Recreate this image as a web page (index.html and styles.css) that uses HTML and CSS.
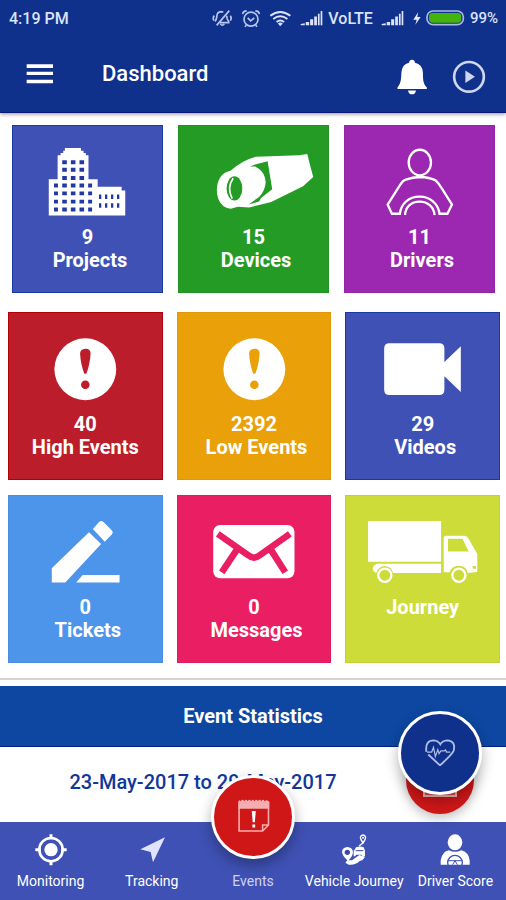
FILE: index.html
```html
<!DOCTYPE html>
<html lang="en">
<head>
<meta charset="utf-8">
<meta name="viewport" content="width=device-width, initial-scale=1">
<title>Dashboard</title>
<link rel="stylesheet" href="styles.css">
</head>
<body>
<div class="screen">
  <header class="top">
    <div class="status">
      <span class="clock">4:19 PM</span>
      <svg class="s-mute" viewBox="38 24 60 54" fill="none" stroke="#b9c5ef" stroke-width="5"><path d="M47 61C54 54 51 47 54 39Q57 32 66 32L72 34M82 44C82 53 84 57 88 61L88 65H62M63 69Q69 76 75 69M52 73L90 29"/><path d="M45 44Q39 51 44 59M93 44Q98 51 93 59"/></svg>
      <svg class="s-alarm" viewBox="124 22 60 56" fill="none" stroke="#b9c5ef" stroke-width="5"><circle cx="154" cy="52" r="21"/><path d="M144 48L153 57L164 48M129 37Q130 27 141 27M167 27Q178 27 179 37M140 70L136 75M168 70L172 75"/></svg>
      <svg class="s-wifi" viewBox="210 26 70 51" fill="none" stroke="#dce3fa" stroke-width="6"><path d="M214 43Q244 20 275 43M223 53Q244 37 266 53M233 62Q244 53 256 62"/><path fill="#dce3fa" stroke="none" d="M237 67Q244 61 252 67L244 75Z"/></svg>
      <svg class="s-signal" viewBox="304 30 68 47" fill="#dce3fa"><path d="M306 75V71L318 69V75ZM321 65H331V75H321ZM334 57H343V75H334ZM346 49H354V75H346ZM357 41H362V75H357ZM365 33H370V75H365Z"/></svg>
      <span class="volte">VoLTE</span>
      <svg class="s-signal" viewBox="304 30 68 47" fill="#dce3fa"><path d="M306 75V71L318 69V75ZM321 65H331V75H321ZM334 57H343V75H334ZM346 49H354V75H346ZM357 41H362V75H357ZM365 33H370V75H365Z"/></svg>
      <svg class="s-bolt" viewBox="641 33 24 39" fill="#e6ebff"><path d="M656 34L642 56H652L648 71L664 48H654Z"/></svg>
      <svg class="s-battery" viewBox="678 30 117 48"><rect x="681" y="33" width="109" height="41" rx="18" fill="#10318b" stroke="#a9b8e5" stroke-width="5"/><rect x="687" y="39" width="97" height="29" rx="11" fill="#43b40b"/></svg>
      <span class="percent">99%</span>
    </div>
    <div class="appbar">
      <button class="icon-btn" aria-label="Menu"><svg class="menu-icon" viewBox="78 187 84 66" fill="#fff"><path d="M80 191H159V202H80ZM80 213H159V223H80ZM80 237H159V248H80Z"/></svg></button>
      <h1>Dashboard</h1>
      <button class="icon-btn bell-btn" aria-label="Notifications"><svg class="bell" viewBox="592 179 92 109" fill="#fff"><path d="M638 181Q646 181 647 190Q670 195 671 220C671 247 673 255 683 265V270H594V265C603 255 605 245 606 220Q607 195 629 190Q630 181 638 181ZM626 274H650Q648 286 638 286T626 274Z"/></svg></button>
      <button class="icon-btn" aria-label="Play"><svg class="play" viewBox="756 180 102 103"><circle cx="807" cy="231" r="45" fill="none" stroke="#ced6f0" stroke-width="8"/><path d="M796 212V250L825 231Z" fill="#ced6f0"/></svg></button>
    </div>
  </header>

  <main>
    <section class="tiles first">
      <a href="#projects" class="tile indigo">
        <svg viewBox="37 28 454 300"><path fill="#fff" d="M146 298V188H173V115H182V108H190V101H195V93H244V101H252V108H259V115H267V188H295V211H368V222H379V298Z"/><path stroke="#2438a4" stroke-width="12" stroke-dasharray="14 12.3" d="M187 136H254M187 159H254M187 184H254M187 207H254M187 231H254M187 256H254M187 280H254"/><path stroke="#2438a4" stroke-width="12" d="M162 207H174M162 231H174M162 256H174M162 280H174M266 207H278M266 231H278M266 256H278M266 280H278"/><path stroke="#2438a4" stroke-width="14" stroke-dasharray="7 11.3" d="M299 241H363M299 268H363"/></svg>
        <span>9</span><span>Projects</span>
      </a>
      <a href="#devices" class="tile green">
        <svg viewBox="-66 -30 454 300"><path fill="#fff" d="M91 104Q126 72 168 61L300 57L325 53L332 82L343 123L312 151L215 199L148 216L113 214L92 220Q63 217 53 188Q43 151 60 124Q70 108 91 104Z"/><path fill="#249b24" d="M150 91L166 85L204 75L218 160L184 187L178 198L146 207Q162 195 178 184Q197 164 198 139Q197 111 176 97L166 91Z"/><ellipse cx="103" cy="158" rx="24" ry="37" fill="#249b24"/><path fill="none" stroke="#fff" stroke-width="5" d="M99 127Q79 155 96 189"/></svg>
        <span>15</span><span>Devices</span>
      </a>
      <a href="#drivers" class="tile purple">
        <svg viewBox="273 28 454 300" fill="none" stroke="#fff" stroke-width="7"><ellipse cx="501" cy="137" rx="34" ry="39"/><path d="M501 181Q531 182 550 192Q560 202 568 216L599 265L585 293H561C557 262 532 241 500 241S444 262 440 293H416L403 265L441 205Q450 191 458 189Q479 182 501 181ZM456 297C457 273 474 256 500 256S544 273 546 297"/></svg>
        <span>11</span><span>Drivers</span>
      </a>
    </section>
    <section class="tiles">
      <a href="#high" class="tile red">
        <svg viewBox="23 19 464 300"><circle cx="255" cy="188" r="94" fill="#fff"/><path fill="#bc1d2b" d="M239 140Q240 127 255 126T271 140Q269 174 258 202H252Q241 174 239 140Z"/><circle cx="255" cy="235" r="13" fill="#bc1d2b"/></svg>
        <span>40</span><span>High Events</span>
      </a>
      <a href="#low" class="tile orange">
        <svg viewBox="23 19 464 300"><circle cx="255" cy="188" r="94" fill="#fff"/><path fill="#e9a009" d="M239 140Q240 127 255 126T271 140Q269 174 258 202H252Q241 174 239 140Z"/><circle cx="255" cy="235" r="13" fill="#e9a009"/></svg>
        <span>2392</span><span>Low Events</span>
      </a>
      <a href="#videos" class="tile indigo">
        <svg viewBox="276 19 464 300" fill="#fff"><path d="M408 109H559Q575 109 575 125V166L625 118V257L575 209V250Q575 266 559 266H408Q392 266 392 250V125Q392 109 408 109Z"/></svg>
        <span>29</span><span>Videos</span>
      </a>
    </section>
    <section class="tiles last">
      <a href="#tickets" class="tile sky">
        <svg viewBox="23 28 464 300" fill="#fff"><path d="M153 246L266 136L303 172L194 289H153ZM278 126L296 106Q303 98 311 106L336 131Q341 136 336 142L314 165ZM227 289L247 266H359V289Z"/></svg>
        <span>0</span><span>Tickets</span>
      </a>
      <a href="#messages" class="tile pink">
        <svg viewBox="529 28 464 300"><rect x="636" y="114" width="247" height="162" rx="21" fill="#fff"/><path fill="none" stroke="#e91e63" stroke-width="20" d="M650 141L744 207Q760 220 776 207L869 141M662 258L708 189M855 258L811 189"/></svg>
        <span>0</span><span>Messages</span>
      </a>
      <a href="#journey" class="tile lime">
        <svg viewBox="276 28 464 300" fill="#fff"><path d="M343 102H565V226H343ZM369 232H565V260H419Q414 241 394 239Q374 240 368 260Q357 255 357 245Q361 235 369 232ZM573 153Q574 147 580 147H636Q643 147 648 155L675 202V257L646 260Q642 239 619 238Q597 239 591 258H573Z"/><path fill="#cddc39" d="M586 156H630L649 195H586ZM661 239H671V247H661Z"/><circle cx="394" cy="267" r="20" fill="none" stroke="#fff" stroke-width="7"/><circle cx="619" cy="267" r="20" fill="none" stroke="#fff" stroke-width="7"/></svg>
        <span>Journey</span>
      </a>
    </section>
    <section class="stats">
      <h2>Event Statistics</h2>
      <p>23-May-2017 to 29-May-2017</p>
      <div class="fabs">
        <button class="fab-small" aria-label="Event list"><svg viewBox="0 0 68 68"><path d="M18 24H50V50H18Z" fill="#dc5052" stroke="#f5b5b7" stroke-width="2"/></svg></button>
        <button class="fab fab-health" aria-label="Health"><svg viewBox="433 62 252 252" fill="none" stroke="#aebbe6" stroke-width="6"><path d="M559 228L521 193M515 184Q510 147 539 147Q553 148 560 160Q567 148 582 147Q611 149 603 181Q600 191 559 228"/><path d="M517 185H532L538 170L544 199L552 177L556 190L562 181H573L577 178L580 185H592" stroke-width="4"/></svg></button>
      </div>
    </section>
  </main>

  <nav class="bottom">
    <a href="#monitoring"><svg viewBox="94 426 120 108"><circle cx="154" cy="479" r="35" fill="none" stroke="#fff" stroke-width="8"/><circle cx="154" cy="479" r="20" fill="#fff"/><path stroke="#fff" stroke-width="9" d="M154 433V448M154 510V526M107 479H123M185 479H201"/></svg>Monitoring</a>
    <a href="#tracking"><svg viewBox="397 426 120 108" fill="#dfe3fb"><path d="M496 442L460 517L453 486L422 478Z"/></svg>Tracking</a>
    <a href="#events" class="events"><span class="fab fab-events"><svg viewBox="633 257 252 252"><path fill="#f5aeb0" d="M711 334Q715 325 720 332Q725 323 731 332Q736 323 742 332Q747 323 753 332Q758 323 764 332Q769 323 775 332Q780 323 786 332Q791 323 797 332Q804 325 812 334V356H711Z"/><path fill="none" stroke="#f5aeb0" stroke-width="5" d="M714 354V428H790L809 409V354M790 428V409H809"/><path fill="#fff" d="M755 364H768L765 400H758ZM757 407H766V417H757Z"/></svg></span>Events</a>
    <a href="#vehicle"><svg viewBox="246 426 120 108"><path fill="#fff" d="M286 471Q302 472 303 487Q302 500 290 511H300L322 495L339 501Q334 511 322 514Q311 526 290 524L280 518L286 511Q270 495 270 485Q271 473 286 471ZM307 481L312 472Q325 467 335 472L339 482V499H332L328 494H313L309 499H305V481Z"/><circle cx="286" cy="487" r="8" fill="#3949ab"/><path stroke="#3949ab" stroke-width="3" d="M311 482H334"/><path fill="none" stroke="#fff" stroke-width="4" d="M333 459Q325 448 325 442Q327 435 333 435T341 442Q341 448 333 459ZM333 459L321 468"/><circle cx="333" cy="443" r="3" fill="#fff"/></svg>Vehicle Journey</a>
    <a href="#score"><svg viewBox="549 426 120 108"><ellipse cx="609" cy="457" rx="22" ry="24" fill="#fff"/><path fill="#fff" d="M566 524V511Q570 485 591 481Q609 490 628 481Q649 486 653 511V524Z"/><circle cx="609" cy="518" r="22" fill="none" stroke="#3f51b5" stroke-width="4"/><path fill="none" stroke="#3f51b5" stroke-width="3" d="M590 512H628M602 524L609 512L616 524"/></svg>Driver Score</a>
  </nav>
</div>
</body>
</html>
```
FILE: styles.css
```css
* { box-sizing: border-box; }

body {
  margin: 0;
  background: #fff;
  color: #fff;
  font-family: Roboto, "Liberation Sans", sans-serif;
}

h1, h2, p { margin: 0; }
a { color: inherit; text-decoration: none; }
button { border: 0; padding: 0; color: inherit; cursor: pointer; }
svg { display: block; flex: none; }

.screen {
  display: flex;
  flex-direction: column;
  min-height: 100vh;
}

.top {
  background: #10318b;
  border-bottom: 1px solid #0a1678;
  box-shadow: 0 1px 4px #00000070;
}

.status {
  display: flex;
  align-items: center;
  height: 36px;
  padding: 0 8px 0 9px;
  color: #dce3fa;
  font-size: 16px;
  font-weight: 500;
}
.clock { margin-right: auto; }
.s-mute { width: 20px; height: 18px; }
.s-alarm { width: 20px; height: 19px; margin-left: 9px; }
.s-wifi { width: 23px; height: 17px; margin-left: 8px; }
.s-signal { width: 23px; height: 16px; margin-left: 8px; }
.volte { margin-left: 5px; }
.s-bolt { width: 8px; height: 13px; margin-left: 9px; }
.s-battery { width: 39px; height: 16px; margin: 0 5px; }
.percent { font-size: 15px; }

.appbar {
  display: flex;
  align-items: center;
  height: 76px;
  padding: 0 20px 0 26px;
}
.appbar h1 {
  flex: 1;
  margin-left: 48px;
  font-size: 22px;
  font-weight: 500;
  line-height: 30px;
}
.icon-btn { background: none; }
.bell-btn { margin-right: 24px; }
.menu-icon { width: 28px; height: 22px; }
.bell { width: 32px; height: 36px; }
.play { width: 34px; height: 34px; }

.appbar .bell, .appbar .play { margin-top: 6px; }

main {
  display: flex;
  flex: 1;
  flex-direction: column;
}

.tiles {
  display: grid;
  grid-template-columns: repeat(3, 1fr);
  gap: 14px;
  padding: 0 6px 15px 8px;
}
.tiles.first {
  gap: 15px;
  padding: 12px 11px 19px 12px;
}
.tiles.last { border-bottom: 2px solid #d5d5d5; }

.tile {
  display: flex;
  flex-direction: column;
  align-items: center;
  height: 168px;
  border: 1px solid #0000000c;
  font-size: 20px;
  font-weight: 700;
  line-height: 23px;
}
.tile svg { width: 100%; height: 100px; }
.tile span + span { padding-left: 5px; }
.tile.red span + span { padding-left: 0; }

.indigo { background: #3f51b5; border-color: #1738a5; }
.green { background: #249b24; }
.purple { background: #9c27b0; }
.red { background: #bc1d2b; border-color: #b1000c; }
.orange { background: #e9a009; }
.sky { background: #4d94eb; }
.pink { background: #e91e63; }
.lime { background: #cddc39; }

.stats {
  position: relative;
  flex: 1;
  margin-top: 6px;
  text-align: center;
}
.stats h2 {
  background: #0d47a1;
  border-bottom: 1px solid #002080;
  font-size: 20px;
  font-weight: 700;
  line-height: 60px;
}
.stats p {
  padding-right: 100px;
  color: #12379b;
  font-size: 20px;
  font-weight: 500;
  line-height: 70px;
}

.fab {
  display: block;
  width: 84px;
  height: 84px;
  border: 3px solid #fff;
  border-radius: 50%;
  box-shadow: 0 6px 14px #00000050;
}
.fab svg { width: 78px; height: 78px; }

.fabs {
  position: absolute;
  top: 25px;
  right: 24px;
}
.fab-health {
  position: relative;
  background: #10318b;
}
.fab-small {
  position: absolute;
  right: 8px;
  bottom: -19px;
  width: 68px;
  height: 68px;
  border-radius: 50%;
  background: #d01718;
  box-shadow: 0 4px 12px #00000040;
}

.bottom {
  display: grid;
  grid-template-columns: repeat(5, 1fr);
  height: 78px;
  background: #3f51b5;
}
.bottom a {
  display: flex;
  flex-direction: column;
  align-items: center;
  justify-content: flex-end;
  padding-bottom: 9px;
  font-size: 14px;
  line-height: 20px;
  white-space: nowrap;
}
.bottom a > svg {
  width: 40px;
  height: 36px;
  margin-bottom: 3px;
}
.bottom .events {
  position: relative;
  color: #cdd3f3;
}
.fab-events {
  position: absolute;
  bottom: 41px;
  background: #d01718;
}
```
